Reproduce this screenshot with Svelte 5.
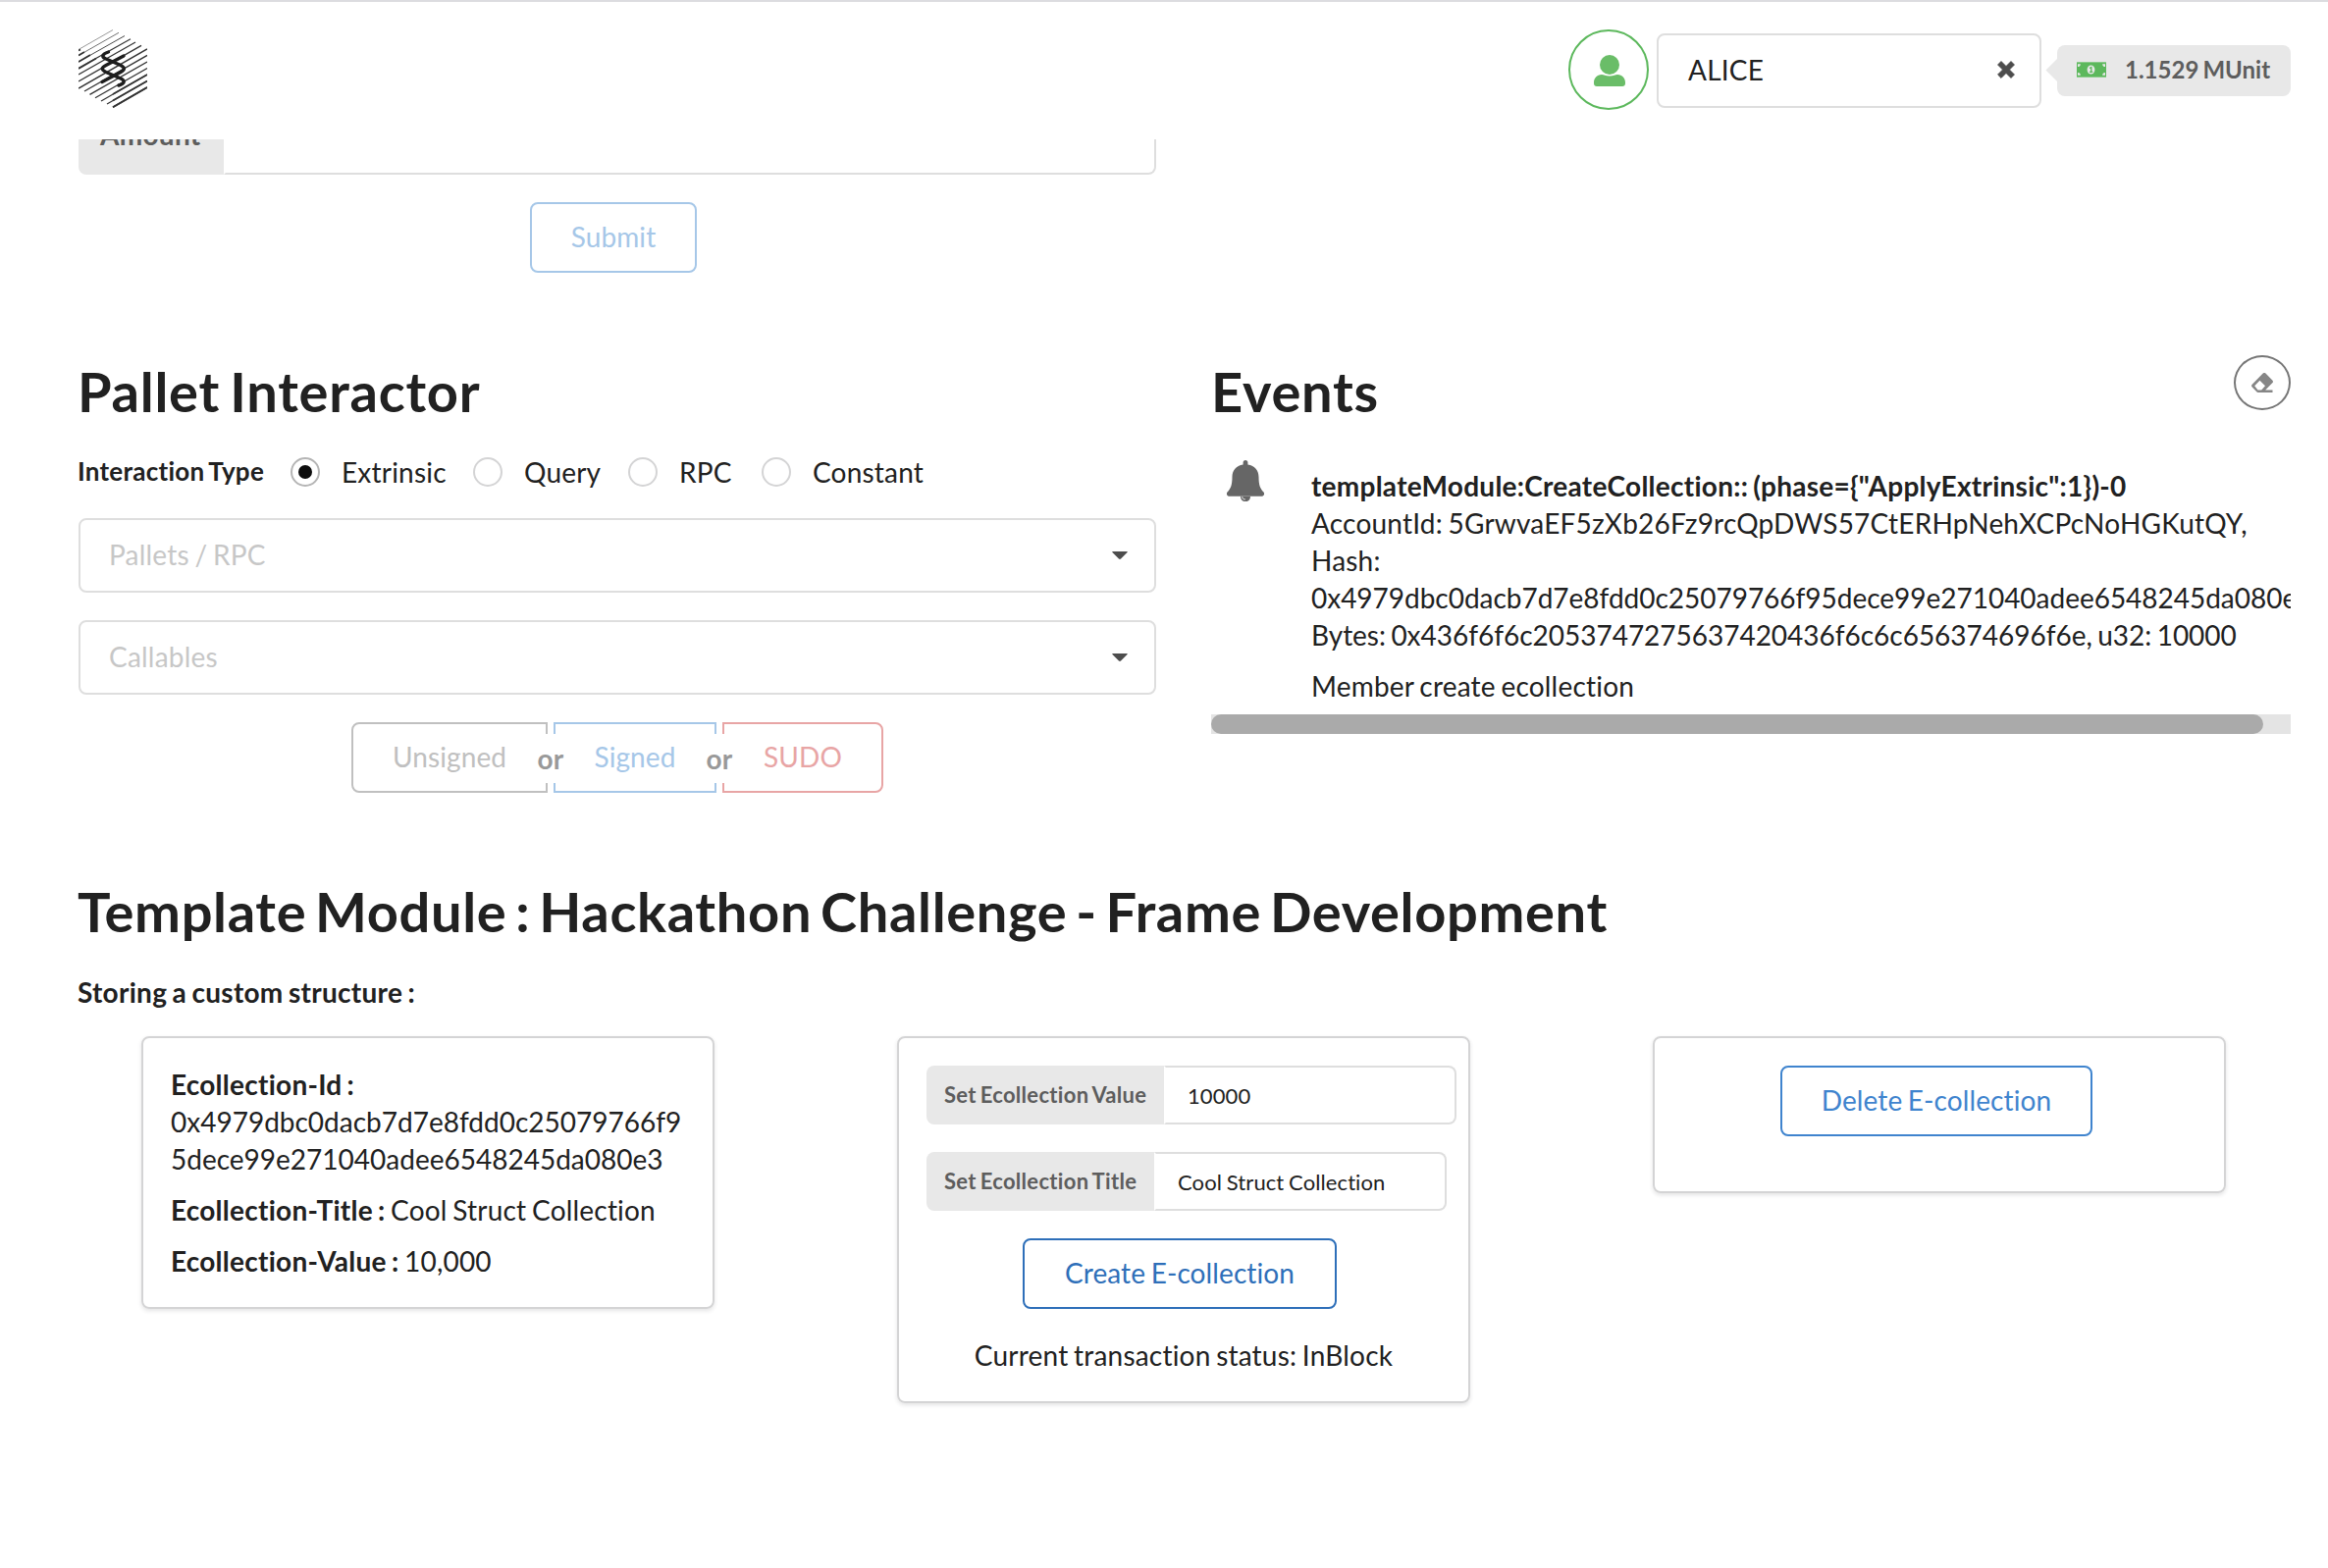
<script>
  const interactions = ['Extrinsic', 'Query', 'RPC', 'Constant'];
  const selected = 'Extrinsic';
  const hash = '0x4979dbc0dacb7d7e8fdd0c25079766f95dece99e271040adee6548245da080e3';

  // Hatching of the hexagonal logo: [x1, y1, x2, y2, stroke width]
  const hatch = [
    [0, 20.5, 35, 0.5, 0.5], [0, 26.6, 41, 3.3, 0.7], [0, 33, 47, 6.5, 0.9], [0, 39.5, 53, 9.8, 1.1],
    [0, 46, 58, 13, 1.2], [0, 53, 64, 16.4, 1.3], [0, 60, 70, 20, 1.5],
    [6, 63, 70, 26.4, 1.3], [11.5, 66.3, 70, 33, 1.4], [17, 69.8, 70, 39.5, 1.3],
    [23, 73, 70, 46, 1.2], [29, 76, 70, 52.5, 1.2], [35, 79.2, 70, 59, 1.6],
  ];
</script>

<div class="page">
  <header>
    <svg class="logo" viewBox="0 0 70 80">
      {#each hatch as [x1, y1, x2, y2, w]}
        <line {x1} {y1} {x2} {y2} stroke-width={w} />
      {/each}
      <path class="heavy" d="M0 21.500L2 20.400M0 26.500L6 23M0 33L12 26M0 40L18 29.5M35 66L70 46M35 72.6L70 52.6M35 79.2L70 59" />
      <path class="strand" d="M30.500 23C24 25 23 28 28 30L43 36.500C47.500 39 47.500 41 43 43.500L24 53.500M46 27L28 36.500C23 39 23 41 28 43.500L43 50C48 52.500 47 55.500 41 57" />
    </svg>
    <div class="account">
      <span class="avatar">
        <svg viewBox="0 0 32 32"><ellipse cx="16" cy="10" rx="10" ry="10" /><path d="M8 20c2 0 4 1.500 8 1.500s6-1.500 8-1.500c5 0 8 4 8 8v1c0 1.800-1.200 3-3 3H3c-1.800 0-3-1.200-3-3v-1c0-4 3-8 8-8z" /></svg>
      </span>
      <div class="picker"><span>ALICE</span>
        <svg viewBox="0 0 18 18"><path d="M4 0.600L9 5.600L14 0.600L17.400 4L12.400 9L17.400 14L14 17.400L9 12.400L4 17.400L0.600 14L5.600 9L0.600 4Z" stroke-linejoin="round" /></svg>
      </div>
      <div class="balance">
        <svg viewBox="0 0 30 16"><rect width="30" height="16" rx="1.200" fill="#5cb85c" /><path d="M0 .500h30M0 15.500h30" stroke="#8ccb8c" /><path d="M1 2.300h2.800a2.800 2.800 0 0 1-2.800 2.800zM29 2.300h-2.800a2.800 2.800 0 0 0 2.800 2.800zM1 13.700h2.800a2.800 2.800 0 0 0-2.800-2.800zM29 13.700h-2.800a2.800 2.800 0 0 1 2.800-2.800z" fill="#e8e8e8" /><ellipse cx="14.500" cy="8" rx="3.900" ry="4.600" fill="#e8e8e8" /><path d="M13 6.500L14.800 5.500V10.300M13 10.300H16.300" fill="none" stroke="#5cb85c" stroke-width="1.300" /></svg>
        <span>1.1529 MUnit</span>
      </div>
    </div>
  </header>

  <main>
    <div class="transfer">
      <div class="amount"><span>Amount</span><i></i></div>
      <button class="btn faded">Submit</button>
    </div>

    <div class="columns">
      <section class="interactor">
        <h1>Pallet Interactor</h1>
        <div class="types">
          <b>Interaction Type</b>
          {#each interactions as name}
            <label class={name.toLowerCase()}><i class:on={name === selected}></i>{name}</label>
          {/each}
        </div>
        {#each ['Pallets / RPC', 'Callables'] as hint}
          <div class="select"><span>{hint}</span><svg viewBox="0 0 16 8"><path d="M1 0h14q1.400 0 .500 1L9 7.500q-1 .900-2 0L.500 1q-.900-1 .500-1z" /></svg></div>
        {/each}
        <div class="group">
          <button class="btn unsigned">Unsigned</button>
          <span class="or">or</span>
          <button class="btn faded signed">Signed</button>
          <span class="or">or</span>
          <button class="btn sudo">SUDO</button>
        </div>
      </section>

      <section class="events">
        <div class="head">
          <h1>Events</h1>
          <button class="erase" aria-label="Clear events">
            <svg viewBox="0 0 22 20"><path fill-rule="evenodd" d="M21.300 10.300a2 2 0 0 0 0-2.800L14.500.600a2 2 0 0 0-2.800 0L.700 11.700a2 2 0 0 0 0 2.800l4.600 4.800c.400.400.900.700 1.500.700H21.500V17.500H14.200zM8.500 7.700L14 13.300L10.200 17.500H6.500L3.200 13.200z" /></svg>
          </button>
        </div>
        <div class="feed">
          <svg viewBox="0 0 38 42"><path d="M19 0c1.500 0 2.400 1 2.400 2.400v2C28.600 5.500 32.500 10.600 32.500 17c0 8 1.500 12 4.700 15.200 2 2 .500 4.600-2 4.600H2.800c-2.500 0-4-2.600-2-4.600C4 29 5.500 25 5.500 17c0-6.400 3.900-11.500 11.100-12.600v-2C16.600 1 17.500 0 19 0z" /><path d="M14 37h10c0 7-10 7-10 0z" /><path class="clapper" d="M15.700 37.300c.2 1.800 1.300 2.600 3 2.700" /></svg>
          <div class="log">
            <b>{'templateModule:CreateCollection:: (phase={"ApplyExtrinsic":1})-0'}</b>
            <span>AccountId: 5GrwvaEF5zXb26Fz9rcQpDWS57CtERHpNehXCPcNoHGKutQY,</span>
            <span>Hash:</span>
            <span class="digits">{hash},</span>
            <span class="digits">{'Bytes: 0x436f6f6c20537472756374' + '20436f6c6c656374696f6e, u32: 10000'}</span>
            <span class="note">Member create ecollection</span>
          </div>
        </div>
        <div class="track"><div class="thumb"></div></div>
      </section>
    </div>

    <section class="module">
      <h1 class="title">Template Module : Hackathon Challenge - Frame Development</h1>
      <h4>Storing a custom structure :</h4>
      <div class="cards">
        <article class="details">
          <p class="digits"><b>Ecollection-Id :</b><br />{hash}</p>
          <p><b>Ecollection-Title :</b> Cool Struct Collection</p>
          <p><b>Ecollection-Value :</b> 10,000</p>
        </article>
        <article class="form">
          <div class="field"><span class="wide">Set Ecollection Value</span><input value="10000" /></div>
          <div class="field"><span>Set Ecollection Title</span><input value="Cool Struct Collection" /></div>
          <button class="btn create">Create E-collection</button>
          <div class="status">Current transaction status: InBlock</div>
        </article>
        <article class="remove">
          <button class="btn delete">Delete E-collection</button>
        </article>
      </div>
    </section>
  </main>
</div>

<style>
  :global(body) { margin: 0; background: #fff; overflow: hidden; }
  * { box-sizing: border-box; }
  .page { width: 2372px; height: 1598px; overflow: hidden; background: #fff; color: #212121; font: 28px/38px Lato, sans-serif; font-variant-ligatures: none; letter-spacing: 0.2px; word-spacing: -1.7px; }
  b { letter-spacing: 0.26px; word-spacing: -2px; }
  header { height: 142px; border-top: 2px solid #dcdce0; padding: 28px 38px 0 80px; display: flex; justify-content: space-between; align-items: flex-start; }
  .logo { width: 70px; height: 80px; stroke: #333; fill: none; }
  .logo .heavy { stroke-width: 1.7; }
  .logo .strand { stroke: #1d1d1d; stroke-width: 3.4; stroke-linecap: round; }
  .account { display: flex; align-items: center; height: 82px; }
  .avatar { width: 82px; height: 82px; border: 2px solid #5cb85c; border-radius: 50%; display: grid; place-items: center; margin-right: 8px; padding-top: 2px; padding-left: 2px; }
  .avatar svg { width: 32px; height: 32px; fill: #6abd68; }
  .picker { width: 392px; height: 76px; border: 2px solid #dedede; border-radius: 8px; padding: 0 25px 2px 30px; display: flex; align-items: center; justify-content: space-between; margin-right: 16px; margin-top: 2px; }
  .picker svg { width: 18px; height: 18px; fill: #4d4d4d; stroke: #4d4d4d; }
  .balance { position: relative; width: 238px; height: 52px; border-radius: 8px; background: #e8e8e8; color: #5d5d5d; font-weight: 700; font-size: 24px; line-height: 50px; letter-spacing: 0; display: flex; padding: 0 0 2px 20px; margin-top: 2px; }
  .balance::before { content: ''; position: absolute; left: -8px; top: 17px; width: 17px; height: 17px; background: #e8e8e8; transform: rotate(45deg); }
  .balance svg { width: 30px; height: 16px; margin: 17px 19px 0 0; }
  main { padding: 0 38px 0 80px; }
  .transfer { width: 1098px; height: 194px; display: flex; flex-direction: column; }
  .amount { height: 36px; display: flex; overflow: hidden; }
  .amount span { width: 148px; height: 76px; margin-top: -40px; background: #e8e8e8; color: #5d5d5d; font-weight: 700; letter-spacing: 0.3px; border-radius: 8px 0 0 8px; padding: 16px 0 0 22px; }
  .amount i { flex: 1; height: 76px; margin-top: -40px; border: 2px solid #dedede; border-left-color: transparent; border-radius: 0 8px 8px 0; }
  .btn { height: 72px; border: 2px solid; border-radius: 8px; background: none; padding: 0 0 2px; font: 28px/38px Lato, sans-serif; font-variant-ligatures: none; letter-spacing: 0.1px; word-spacing: -1.7px; }
  .faded { color: #a6c7e8; }
  .transfer .btn { width: 170px; margin: 28px 0 0 460px; }
  .columns { display: flex; gap: 56px; height: 548px; }
  h1 { margin: 0; font-size: 56px; line-height: 72px; font-weight: 700; letter-spacing: 0.75px; word-spacing: -4px; text-indent: -1px; }
  .title { word-spacing: -5.4px; letter-spacing: 0.66px; }
  .interactor { width: 1098px; padding-top: 27px; }
  .types { display: flex; height: 30px; margin: 31px 0 32px; align-items: center; }
  .types b { width: 216px; font-size: 26px; line-height: 30px; padding-bottom: 2px; white-space: nowrap; text-indent: -1px; }
  label { display: flex; align-items: center; gap: 22px; line-height: 30px; }
  label i { width: 30px; height: 30px; border: 2px solid #d4d4d5; border-radius: 50%; display: grid; place-items: center; }
  label i.on { border-color: #b5b5b5; }
  i.on::after { content: ''; width: 14px; height: 14px; border-radius: 50%; background: #0d0d0d; }
  .extrinsic { width: 186px; }
  .query { width: 158px; }
  .rpc { width: 136px; }
  .select { height: 76px; margin-bottom: 28px; border: 2px solid #dedede; border-radius: 8px; padding: 0 27px 2px 29px; color: #c7c7c7; display: flex; align-items: center; justify-content: space-between; }
  .select svg { width: 16px; height: 8px; margin-top: 2px; fill: #4d4d4d; }
  .group { display: flex; margin-left: 278px; }
  .or { position: relative; width: 6px; height: 50px; margin-top: 12px; z-index: 1; display: flex; justify-content: center; background: #fff; color: #999; font-weight: 700; line-height: 50px; box-shadow: -4px 0 #fff, 4px 0 #fff; }
  .unsigned { width: 200px; color: #c0c0c0; border-radius: 8px 0 0 8px; }
  .signed { width: 166px; border-radius: 0; }
  .sudo { width: 164px; color: #e8a5a5; border-radius: 0 8px 8px 0; }
  .events { width: 1100px; padding-top: 26px; }
  .head { display: flex; justify-content: space-between; height: 98px; }
  .head h1 { padding-top: 1px; text-indent: 0; }
  .erase { width: 58px; height: 56px; border: 2px solid #767676; border-radius: 50%; background: none; padding: 0; display: grid; place-items: center; }
  .erase svg { width: 22px; height: 20px; fill: #868686; }
  .feed { height: 268px; overflow: hidden; display: flex; padding: 9px 0 0 16px; }
  .feed svg { width: 38px; height: 42px; margin-right: 48px; fill: #666; flex: none; }
  .feed .clapper { fill: none; stroke: #fff; stroke-width: 1; }
  .log { display: flex; flex-direction: column; padding-top: 7px; white-space: nowrap; }
  .digits { letter-spacing: -0.02px; }
  .note { margin-top: 14px; }
  .track { height: 20px; background: #e4e4e4; }
  .thumb { width: 1072px; height: 20px; background: #aaa; border-radius: 10px; }
  .module { padding-top: 9px; }
  h4 { margin: 27px 0 26px; font-size: 28px; line-height: 38px; letter-spacing: 0.28px; word-spacing: -1.7px; text-indent: -1px; }
  .cards { display: flex; gap: 186px; padding-left: 64px; align-items: flex-start; }
  article { width: 584px; border: 2px solid #d4d4d5; border-radius: 8px; box-shadow: 0 2px 4px rgba(34, 36, 38, 0.12); padding: 28px; }
  .details { height: 278px; }
  .details p { margin: 0 0 14px; overflow-wrap: anywhere; }
  .details .digits { letter-spacing: 0; }
  .form { height: 374px; }
  .field { height: 60px; margin-bottom: 28px; display: flex; font-size: 22px; line-height: 30px; }
  .field span { width: 232px; flex: none; background: #e8e8e8; color: #5d5d5d; font-weight: 700; letter-spacing: 0.3px; border-radius: 8px 0 0 8px; padding: 15px 0 0 18px; white-space: nowrap; }
  .field .wide { width: 242px; }
  input { width: 298px; flex: none; border: 2px solid #dedede; border-left-color: transparent; border-radius: 0 8px 8px 0; padding: 2px 0 0 22px; font: 22px/30px Lato, sans-serif; font-variant-ligatures: none; letter-spacing: 0.1px; word-spacing: -1px; color: #212121; background: none; }
  .create { display: block; width: 320px; margin-left: 98px; color: #2e6fb9; }
  .status { margin-top: 28px; text-align: center; }
  .remove { height: 160px; }
  .delete { display: block; width: 318px; margin-left: 100px; color: #3f84ce; }
</style>
